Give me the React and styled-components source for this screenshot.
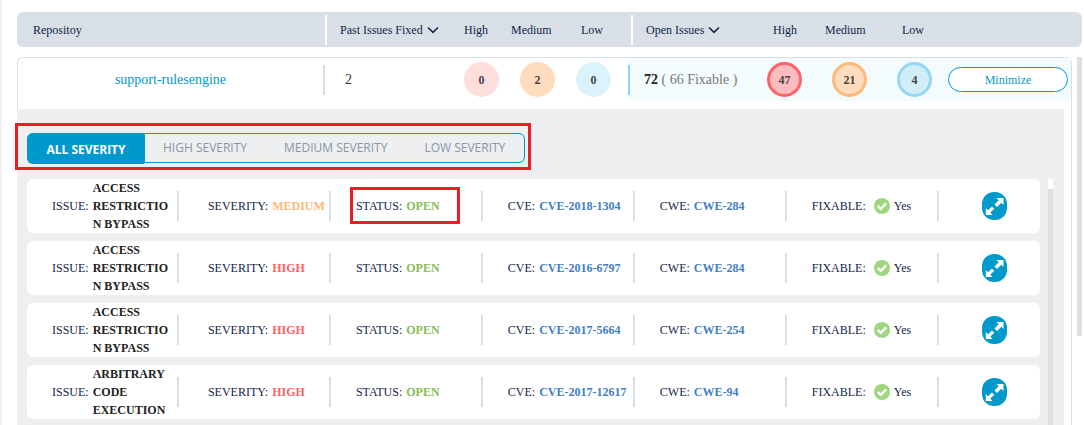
import React, { useState } from "react";
import styled, { createGlobalStyle } from "styled-components";

const color = {
  ink: "#12264a",
  dark: "#222222",
  blue: "#0099cc",
  link: "#4180c4",
  line: "#d8dfe7",
  panel: "#eeeff1",
  track: "#dfdfdf",
  mark: "#ed1c24",
  high: "#ff6166",
  medium: "#ffb877",
  low: "#93d8f0",
  open: "#87bd56",
};

const GlobalStyle = createGlobalStyle`
  * { box-sizing: border-box; }
  body {
    margin: 0;
    background: #fff;
    color: ${color.ink};
    font: 12px/18px "Liberation Serif", "Times New Roman", serif;
  }
  button { font: inherit; cursor: pointer; }
`;

const Page = styled.main`
  height: 100vh;
  overflow: hidden;
  border-left: 2px solid #f2f2f2;
  padding: 12px 2px 0 15px;
`;

const Repositories = styled.table`
  display: block;
`;

const Head = styled.thead`
  display: block;
  margin-bottom: 10px;
`;

const HeadRow = styled.tr`
  display: grid;
  grid-template-columns: 308fr 139fr 47fr 70fr 50fr 142fr 52fr 77fr 180fr;
  align-items: center;
  height: 35px;
  border-radius: 6px;
  background: ${color.line};
`;

const HeadCell = styled.th`
  display: flex;
  align-items: center;
  height: 30px;
  padding: 0 0 0 ${(p) => p.$pad || 0}px;
  border-left: ${(p) => (p.$divided ? "2px solid #fff" : "0")};
  font-weight: 400;
  white-space: nowrap;
`;

const SortButton = styled.button`
  display: flex;
  align-items: center;
  gap: 4px;
  padding: 0;
  border: 0;
  background: none;
  color: inherit;
`;

const Body = styled.tbody`
  display: grid;
  grid-template-columns: minmax(0, 1fr) 5px;
  column-gap: 5px;

  &::after {
    content: "";
    grid-column: 2;
    grid-row: 1 / 3;
    height: 279px;
    border-radius: 0 0 2px 2px;
    background: ${color.track};
  }
`;

const SummaryRow = styled.tr`
  grid-column: 1;
  display: grid;
  grid-template-columns: 307fr 139fr 56fr 56fr 52fr 139fr 65fr 65fr 51fr 123fr;
  padding-bottom: 8px;
  border: 1px solid ${color.line};
  border-bottom: 0;
  border-radius: 6px 6px 0 0;
`;

const SummaryCell = styled.td`
  display: flex;
  align-items: center;
  height: 43px;
  padding: 0;
  background: ${(p) => (p.$tinted ? "#f3fbfd" : "none")};
  font-size: 14px;
  white-space: nowrap;
`;

const RepoName = styled.a`
  flex: 1;
  height: 30px;
  border-right: 2px solid ${color.line};
  color: ${color.blue};
  line-height: 30px;
  text-align: center;
  text-decoration: none;
`;

const FixedTotal = styled.span`
  padding-left: 20px;
  color: #333;
`;

const OpenTotal = styled.span`
  height: 30px;
  padding-left: 14px;
  border-left: 2px solid ${color.low};
  color: #777;
  line-height: 30px;

  strong { color: ${color.dark}; }
`;

const Count = styled.span`
  display: grid;
  place-items: center;
  width: 35px;
  height: 35px;
  border: 3px solid ${(p) => p.$ring || p.$fill};
  border-radius: 50%;
  background: ${(p) => p.$fill};
  color: #444;
  font-size: 12px;
  font-weight: 700;
`;

const MinimizeButton = styled.button`
  flex: 1;
  height: 25px;
  margin-right: 3px;
  padding: 0;
  border: 1px solid ${color.blue};
  border-radius: 13px;
  background: #fff;
  color: ${color.blue};
  font-size: 12px;
`;

const DetailRow = styled.tr`
  grid-column: 1;
  display: block;
  padding-right: 7px;
  border-right: 1px solid ${color.line};
`;

const DetailPanel = styled.td`
  display: block;
  padding: 24px 11px 24px 10px;
  background: ${color.panel};
`;

const Tabs = styled.div`
  position: relative;
  display: flex;
  width: fit-content;
  height: 30px;
  margin-bottom: 16px;
  border: 1px solid ${color.blue};
  border-radius: 6px;
  font-family: "Open Sans", sans-serif;
`;

const Tab = styled.button`
  flex: none;
  height: 28px;
  padding: 0 19px 0 18px;
  border: 0;
  background: none;
  color: #8896a8;

  &[aria-selected="true"] {
    width: 118px;
    height: 31px;
    margin: -1px 0 0 -1px;
    padding: 2px 0 0;
    border-radius: 6px 2px 2px 6px;
    background: ${color.blue};
    color: #fff;
    font-weight: 700;
  }
`;

const TabsMark = styled.span`
  position: absolute;
  inset: -11px -7px -8px -13px;
  border: 3px solid ${color.mark};
  pointer-events: none;
`;

const StatusMark = styled.span`
  position: absolute;
  inset: 8px 23px 9px 19px;
  border: 3px solid ${color.mark};
  pointer-events: none;
`;

const IssueArea = styled.div`
  display: grid;
  grid-template-columns: minmax(0, 1fr) 5px;
  column-gap: 8px;
`;

const IssueList = styled.ul`
  display: flex;
  flex-direction: column;
  gap: 8px;
  margin: 0;
  padding: 0;
  list-style: none;
`;

const ScrollTrack = styled.div`
  height: 100vh;
  border-top: 10px solid #fff;
  border-radius: 2px 2px 0 0;
  background: ${color.track};
`;

const IssueCard = styled.li`
  display: grid;
  grid-template-columns: repeat(6, minmax(0, 15fr)) minmax(0, 10fr);
  border-radius: 6px;
  background: #fff;
`;

const Field = styled.div`
  position: relative;
  display: flex;
  align-items: center;
  gap: 4px;
  min-height: 54px;
  padding-left: ${(p) => p.$pad || 25}px;
  white-space: nowrap;

  &::after {
    content: "";
    position: absolute;
    right: 0;
    width: 2px;
    height: 30px;
    background: ${color.line};
  }
`;

const Title = styled.strong`
  width: 78px;
  color: ${color.dark};
  white-space: normal;
  word-break: break-word;
`;

const Value = styled.strong`
  color: ${(p) => p.$color};
`;

const CodeLink = styled.a`
  color: ${color.link};
  font-weight: 700;
  text-decoration: none;
`;

const Fixable = styled.span`
  display: flex;
  align-items: center;
  gap: 4px;
  padding-left: 4px;
`;

const ExpandCell = styled.div`
  display: flex;
  align-items: center;
  justify-content: center;
  padding-left: 10px;
`;

const ExpandButton = styled.button`
  display: grid;
  place-items: center;
  width: 25px;
  height: 28px;
  padding: 0;
  border: 0;
  border-radius: 12px;
  background: ${color.blue};
`;

const Chevron = () => (
  <svg width="12" height="8" viewBox="0 0 12 8" fill="none" aria-hidden="true">
    <path d="M1 1.5 6 6.3 11 1.5" stroke={color.ink} strokeWidth="1.6" />
  </svg>
);

const CheckIcon = () => (
  <svg width="16" height="16" viewBox="0 0 16 16" fill="none" aria-hidden="true">
    <circle cx="8" cy="8" r="8" fill="#9fd67f" />
    <path d="M3.8 8 6.8 10.8 12.2 5.4" stroke="#fff" strokeWidth="2.4" />
  </svg>
);

const ExpandIcon = () => (
  <svg width="19" height="19" viewBox="0 0 19 19" aria-hidden="true">
    <path
      fill="#fff"
      d="M11.5 1H18.5V8L16.3 5.8 12 10 9.5 7.5 13.7 3.2ZM7.5 18H.8V11L3 13.2 7 9.4 9.4 11.8 5.3 15.6Z"
    />
  </svg>
);

const tabs = ["ALL SEVERITY", "HIGH SEVERITY", "MEDIUM SEVERITY", "LOW SEVERITY"];

const issues = [
  { title: "ACCESS RESTRICTION BYPASS", severity: "MEDIUM", cve: "CVE-2018-1304", cwe: "CWE-284", marked: true },
  { title: "ACCESS RESTRICTION BYPASS", severity: "HIGH", cve: "CVE-2016-6797", cwe: "CWE-284" },
  { title: "ACCESS RESTRICTION BYPASS", severity: "HIGH", cve: "CVE-2017-5664", cwe: "CWE-254" },
  { title: "ARBITRARY CODE EXECUTION", severity: "HIGH", cve: "CVE-2017-12617", cwe: "CWE-94" },
];

function Issue({ title, severity, cve, cwe, marked }) {
  return (
    <IssueCard>
      <Field>
        ISSUE: <Title>{title}</Title>
      </Field>
      <Field $pad={29}>
        SEVERITY: <Value $color={severity === "HIGH" ? color.high : color.medium}>{severity}</Value>
      </Field>
      <Field>
        STATUS: <Value $color={color.open}>OPEN</Value>
        {marked && <StatusMark />}
      </Field>
      <Field>
        CVE: <CodeLink href="#cve">{cve}</CodeLink>
      </Field>
      <Field>
        CWE: <CodeLink href="#cwe">{cwe}</CodeLink>
      </Field>
      <Field>
        FIXABLE:
        <Fixable>
          <CheckIcon />
          Yes
        </Fixable>
      </Field>
      <ExpandCell>
        <ExpandButton aria-label={`Expand ${cve}`}>
          <ExpandIcon />
        </ExpandButton>
      </ExpandCell>
    </IssueCard>
  );
}

export default function App() {
  const [active, setActive] = useState(tabs[0]);
  return (
    <>
      <GlobalStyle />
      <Page>
        <Repositories>
          <Head>
            <HeadRow>
              <HeadCell $pad={16}>Repositoy</HeadCell>
              <HeadCell $divided $pad={13}>
                <SortButton>
                  Past Issues Fixed <Chevron />
                </SortButton>
              </HeadCell>
              <HeadCell>High</HeadCell>
              <HeadCell>Medium</HeadCell>
              <HeadCell>Low</HeadCell>
              <HeadCell $divided $pad={13}>
                <SortButton>
                  Open Issues <Chevron />
                </SortButton>
              </HeadCell>
              <HeadCell>High</HeadCell>
              <HeadCell>Medium</HeadCell>
              <HeadCell>Low</HeadCell>
            </HeadRow>
          </Head>
          <Body>
            <SummaryRow>
              <SummaryCell>
                <RepoName href="#repository">support-rulesengine</RepoName>
              </SummaryCell>
              <SummaryCell>
                <FixedTotal>2</FixedTotal>
              </SummaryCell>
              <SummaryCell>
                <Count $fill="#ffdede">0</Count>
              </SummaryCell>
              <SummaryCell>
                <Count $fill="#ffdcbd">2</Count>
              </SummaryCell>
              <SummaryCell>
                <Count $fill="#dbf3fa">0</Count>
              </SummaryCell>
              <SummaryCell $tinted>
                <OpenTotal>
                  <strong>72</strong> ( 66 Fixable )
                </OpenTotal>
              </SummaryCell>
              <SummaryCell $tinted>
                <Count $fill="#ffbcbe" $ring={color.high}>47</Count>
              </SummaryCell>
              <SummaryCell $tinted>
                <Count $fill="#ffdcbd" $ring={color.medium}>21</Count>
              </SummaryCell>
              <SummaryCell $tinted>
                <Count $fill="#d1edf8" $ring={color.low}>4</Count>
              </SummaryCell>
              <SummaryCell $tinted>
                <MinimizeButton>Minimize</MinimizeButton>
              </SummaryCell>
            </SummaryRow>
            <DetailRow>
              <DetailPanel colSpan={10}>
                <Tabs role="tablist">
                  {tabs.map((tab) => (
                    <Tab key={tab} role="tab" aria-selected={tab === active} onClick={() => setActive(tab)}>
                      {tab}
                    </Tab>
                  ))}
                  <TabsMark />
                </Tabs>
                <IssueArea>
                  <IssueList>
                    {issues.map((issue) => (
                      <Issue key={issue.cve} {...issue} />
                    ))}
                  </IssueList>
                  <ScrollTrack />
                </IssueArea>
              </DetailPanel>
            </DetailRow>
          </Body>
        </Repositories>
      </Page>
    </>
  );
}
